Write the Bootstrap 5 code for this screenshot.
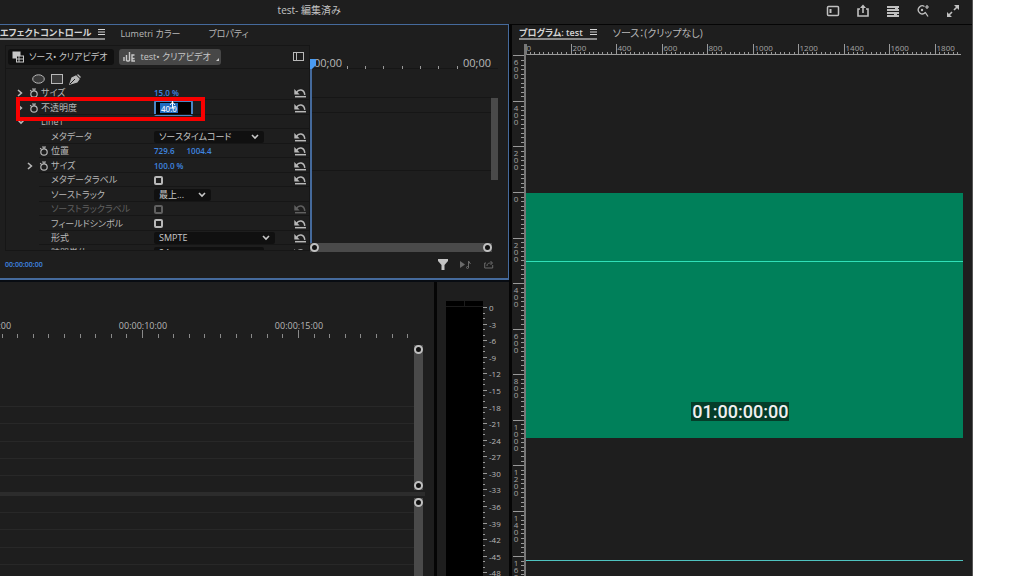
<!DOCTYPE html>
<html lang="ja">
<head>
<meta charset="utf-8">
<meta name="viewport" content="width=device-width, initial-scale=1">
<title>test - 編集済み</title>
<link rel="stylesheet" href="https://cdn.jsdelivr.net/npm/bootstrap@5.3.0/dist/css/bootstrap.min.css">
<style>
  :root { --panel:#1e1e1e; --ink:#b8b8b8; --hot:#3f86e0; --edge:#456a9c; --seam:#050505; --rule:#161616; }
  body { background:#fff; color:var(--ink); font:9px/12px "Open Sans","Noto Sans CJK JP",sans-serif; font-feature-settings:"palt"; }
  .app { width:95%; background:var(--panel); border-right:1px solid #555; }
  button { background:none; border:0; padding:0; color:inherit; font:inherit; line-height:inherit; }
  svg { display:block; fill:none; stroke:currentColor; }
  svg text { fill:currentColor; stroke:none; }
  .topbar { height:24px; padding:0 12px 0 3px; }
  .topbar h1 { font-size:10px; line-height:20px; flex:0 0 64%; color:#c4c4c4; }
  .topbar nav { gap:16px; height:21px; color:#c0c0c0; }
  .leftside { flex:0 0 510px; border-right:1px solid var(--seam); }
  .effects { border:1px solid var(--edge); border-left:0; border-bottom-width:2px; }
  .tabs { height:16px; line-height:13px; }
  .tabs button { height:15px; padding-top:2px; white-space:nowrap; }
  .tabs .on { color:#d4d4d4; font-weight:600; border-bottom:2px solid #8a8a8a; gap:7px; }
  .effects .tabs { gap:15px; }
  .tabs .apart { margin-left:13px; }
  .props { flex:0 0 310px; padding-left:5px; }
  .propbox { border:1px solid var(--rule); }
  .chips { height:23px; gap:5px; padding:0 5px 0 2px; border-bottom:1px solid var(--rule); }
  .chip { height:16px; border-radius:3px; background:#101010; gap:5px; padding:0 7px 0 4px; line-height:14px; color:#c8c8c8; white-space:nowrap; }
  .chip.lit { background:#474747; padding-right:2px; }
  .masks { height:17px; gap:6px; padding-left:26px; padding-top:3px; }
  .clip { height:164px; overflow:hidden; }
  .rows { height:174px; display:grid; grid-template-rows:repeat(12,1fr); }
  .prow { display:grid; grid-template-columns:148px 1fr 14px; align-items:center; position:relative; padding-right:1px; min-height:0; }
  .prow::after { content:""; position:absolute; left:33px; right:0; bottom:0; border-bottom:1px solid var(--rule); }
  .pname { display:grid; grid-template-columns:12px 12px 1fr; align-items:center; padding-left:11px; }
  .pname.deep { padding-left:21px; }
  .val { color:var(--hot); font-size:8px; font-weight:600; gap:12px; }
  .off { color:#606060; }
  .pick { appearance:none; height:12px; width:110px; border:0; border-radius:2px; padding:0 5px; color:#c8c8c8; line-height:12px; font:inherit;
    background:#101010 url("data:image/svg+xml,%3Csvg xmlns='http://www.w3.org/2000/svg' viewBox='0 0 8 6'%3E%3Cpath d='M1 1l3 3 3-3' fill='none' stroke='%23c8c8c8' stroke-width='1.6'/%3E%3C/svg%3E") no-repeat right 5px center/8px 6px; }
  .pick.slim { width:57px; } .pick.wide { width:121px; }
  .box { appearance:none; width:9px; height:9px; margin:0; border:2px solid #b8b8b8; border-radius:2px; }
  .box:disabled { border-color:#606060; }
  .amount { width:39px; height:16px; border:2px solid #4a86c6; border-radius:2px; padding:0 5px; color:#e6f0ff; font-size:8px; font-weight:600; line-height:12px; background:linear-gradient(#1f6cc0,#1f6cc0) no-repeat 4px center/18px 10px #000; outline:0; }
  .pointer { position:absolute; left:162px; top:0; color:#fff; }
  .callout { position:absolute; left:10px; top:-3px; width:189px; height:24px; border:4px solid #f80000; z-index:3; }
  .keys { flex:1 1 0; min-width:0; padding-right:10px; }
  .keyhead { height:12px; overflow:visible; border-bottom:1px solid var(--rule); }
  .keybody { height:174px; border-left:2px solid var(--edge); position:relative; }
  .keylines { margin-top:28px; height:145px; flex:1; background:linear-gradient(var(--rule),var(--rule)) 0 0/100% 1px no-repeat,linear-gradient(var(--rule),var(--rule)) 0 15px/100% 1px no-repeat,linear-gradient(var(--rule),var(--rule)) 0 73px/100% 1px no-repeat; }
  .vthumb { width:7px; height:82px; background:#4a4a4a; margin-top:29px; }
  .playhead { position:absolute; left:-2px; top:-12px; color:#4a9af0; }
  .hbar { height:9px; background:#4a4a4a; margin-right:6px; }
  .knob { width:9px; height:9px; border:2px solid #c0c0c0; border-radius:50%; background:#111; flex:none; }
  .efoot { height:26px; padding:0 14px 0 5px; color:#6a6a6a; }
  .tc { font-size:7px; font-weight:600; color:var(--hot); }
  .lower { border-top:2px solid #080c12; min-height:0; }
  .timeline { padding-top:36px; border-right:3px solid var(--seam); min-width:0; }
  .truler { height:23px; }
  .tracks { display:grid; flex:1; }
  .upper { grid-template-rows:66px 17px 18px 17px 17px 16px; }
  .under { grid-template-rows:17px 17px 18px 17px 17px; }
  .track { border-bottom:1px solid #282828; }
  .sbar { width:9px; background:#4a4a4a; margin:4px 0 2px; }
  .under + .sbar { margin:2px 0 0; }
  .trackset { padding-right:11px; }
  .splitline { height:4px; background:#2c2c2c; margin-right:9px; }
  .meter { flex:0 0 72px; padding:19px 0 0 9px; }
  .bars { width:37px; background:#000; }
  .bars i { height:6px; border-bottom:1px solid #1b1b1b; flex:1; }
  .bars i + i { border-left:1px solid #1b1b1b; }
  .program { border-left:2px solid var(--seam); border-top:1px solid var(--seam); min-width:0; }
  .program .tabs { padding-left:7px; gap:16px; }
  .tabs .source { font-size:10px; }
  .hrule { height:14px; margin-left:12px; color:#a4a4a4; }
  .vrule { flex:0 0 14px; color:#a4a4a4; border-right:2px solid #777; overflow:hidden; }
  .stage { position:relative; padding:138px 9px 0 0; }
  .frame { aspect-ratio:16/9; background:#00805a; padding-bottom:17px; }
  .stamp { font:500 18px/19px Roboto,sans-serif; color:#f0f0f0; background:#053d29; padding:0 1px; margin-right:8px; }
  .guide { position:absolute; left:0; right:9px; height:1px; background:#4fc4c0; }
  .guide.first { top:206px; background:#30e0b8; } .guide.second { top:505px; }
</style>
</head>
<body>
<svg width="0" height="0" class="position-absolute" aria-hidden="true">
  <symbol id="menu" viewBox="0 0 7 8"><path d="M0 1.5h7M0 4h7M0 6.5h7" stroke-width="1.2"/></symbol>
  <symbol id="watch" viewBox="0 0 10 10"><circle cx="5" cy="6" r="3.2" stroke-width="1.2"/><path d="M3 1h4M5 1v2M1.2 2.2l1.2 1.2" stroke-width="1.2"/></symbol>
  <symbol id="undo" viewBox="0 0 12 10"><path d="M2.5 4.5C4.5 1 10 .8 10.8 6.8" stroke-width="1.5"/><path d="M0.3 1v5.6h5.4z" fill="currentColor" stroke="none"/><path d="M1 8.7h11" stroke-width="1.5"/></symbol>
  <symbol id="right" viewBox="0 0 6 8"><path d="M1 1l3.4 3L1 7" stroke-width="1.6"/></symbol>
  <symbol id="down" viewBox="0 0 8 6"><path d="M1 1l3 3 3-3" stroke-width="1.6"/></symbol>
</svg>

<div class="app vh-100 overflow-hidden d-flex flex-column">
  <header class="topbar d-flex justify-content-between">
    <h1 class="m-0 text-center fw-normal">test- 編集済み</h1>
    <nav class="d-flex align-items-center">
      <button aria-label="ワークスペース"><svg width="14" height="12"><rect x="1.5" y="1.5" width="11" height="9" rx="1" stroke-width="1.5"/><path d="M4.5 4v4" stroke-width="2"/></svg></button>
      <button aria-label="書き出し"><svg width="14" height="14"><path d="M4 5H2v7h10V5h-2M7 9V2" stroke-width="1.6"/><path d="M4 4l3-3.6L10 4z" fill="currentColor" stroke="none"/></svg></button>
      <button aria-label="パネル"><svg width="14" height="12"><path d="M1 2h12M1 5h12M1 8h12M1 11h12" stroke-width="1.8"/><path d="M9 3.5h3M8 9.5h3" stroke-width="1"/></svg></button>
      <button aria-label="検索"><svg width="14" height="14"><path d="M8.5 2.5a4 4 0 1 0 .8 6M9 8l3 4.5" stroke-width="1.3"/><circle cx="6" cy="6" r="1.2" fill="currentColor" stroke="none"/><path d="M11 1v4M9 3h4" stroke-width="1.2"/></svg></button>
      <button aria-label="全画面"><svg width="14" height="14"><path d="M3 11l3-3M8 6l3-3" stroke-width="1.6"/><path d="M8 1h5v5zM1 8v5h5z" fill="currentColor" stroke="none"/></svg></button>
    </nav>
  </header>

  <main class="d-flex flex-fill" style="min-height:0">
    <div class="leftside d-flex flex-column">
      <section class="effects" aria-label="エフェクトコントロール">
        <div class="tabs d-flex">
          <button class="on d-flex align-items-center">エフェクトコントロール<svg width="7" height="8"><use href="#menu"/></svg></button>
          <button>Lumetri カラー</button>
          <button class="apart">プロパティ</button>
        </div>
        <div class="d-flex pt-1">
          <div class="props">
            <div class="propbox">
              <div class="chips d-flex align-items-center">
                <button class="chip d-flex align-items-center"><svg width="12" height="12"><rect x="1" y="1" width="7" height="6" fill="currentColor"/><rect x="4.5" y="5" width="7" height="6" fill="#101010"/><path d="M5 8h6M7 5v6" stroke-width="1"/></svg>ソース• クリアビデオ</button>
                <button class="chip lit d-flex align-items-center"><svg width="12" height="12"><path d="M1 6v4M3.5 4v6M3.5 10h3M6.5 1v9M11.5 4H9v3.5h2.5M9 7v3h3" stroke-width="1.4"/></svg>test• クリアビデオ<svg class="align-self-end mb-1" width="3" height="3"><path d="M3 0v3H0z" fill="currentColor" stroke="none"/></svg></button>
                <button class="ms-auto" aria-label="表示"><svg width="11" height="9"><rect x=".5" y=".5" width="10" height="8"/><path d="M3.5 1v7"/></svg></button>
              </div>
              <div class="masks d-flex align-items-center">
                <button aria-label="楕円"><svg width="13" height="10"><ellipse cx="6.5" cy="5" rx="5.8" ry="4.2" fill="#3a3a3a"/></svg></button>
                <button aria-label="長方形"><svg width="12" height="10"><rect x=".5" y=".5" width="11" height="9" fill="#3a3a3a"/></svg></button>
                <button aria-label="ペン"><svg width="13" height="12"><path d="M1 11l2-6 4-2 3 3-2 3zM8.5 1.5l3 3" fill="currentColor" stroke-width="1.3"/><path d="M1 11l5-5" stroke="#1e1e1e"/></svg></button>
              </div>
              <div class="clip"><div class="rows" id="rows"></div></div>
            </div>
          </div>
          <div class="keys pt-2 mt-1">
            <svg class="keyhead w-100" id="keyruler"></svg>
            <div class="keybody d-flex">
              <svg class="playhead" width="6" height="12"><path d="M0 2h6v6l-4 4H0z" fill="currentColor" stroke="none"/></svg>
              <div class="keylines"></div><div class="vthumb"></div>
            </div>
            <div class="hbar d-flex justify-content-between"><i class="knob"></i><i class="knob"></i></div>
          </div>
        </div>
        <footer class="efoot d-flex align-items-center">
          <span class="tc me-auto">00:00:00:00</span>
          <div class="d-flex align-items-center gap-2">
            <button class="me-1" aria-label="フィルター"><svg width="10" height="11" style="color:#c4c4c4"><path d="M0 0h10v2L6.5 6v5h-3V6L0 2z" fill="currentColor" stroke="none"/></svg></button>
            <button class="me-1" aria-label="再生"><svg width="12" height="9"><path d="M0 1l5 3.5L0 8z" fill="currentColor" stroke="none"/><path d="M8.500 8V1l2 3"/><circle cx="7.500" cy="7.500" r="1"/></svg></button>
            <button aria-label="共有"><svg width="10" height="9"><path d="M2 3H.7v5h8V5M3 6c0-3 2-3 5-3M6.5 1l2 2-2 2"/></svg></button>
          </div>
        </footer>
      </section>

      <div class="lower d-flex flex-fill">
        <section class="timeline flex-fill d-flex flex-column" aria-label="タイムライン">
          <svg class="truler w-100 flex-shrink-0" id="truler"></svg>
          <div class="trackset d-flex flex-shrink-0">
            <div class="tracks upper"><div class="track"></div><div class="track"></div><div class="track"></div><div class="track"></div><div class="track"></div><div></div></div>
            <div class="sbar d-flex flex-column justify-content-between"><i class="knob"></i><i class="knob"></i></div>
          </div>
          <div class="splitline flex-shrink-0"></div>
          <div class="trackset d-flex flex-fill">
            <div class="tracks under"><div class="track"></div><div class="track"></div><div class="track"></div><div class="track"></div><div></div></div>
            <div class="sbar"><i class="knob d-block"></i></div>
          </div>
        </section>
        <section class="meter d-flex" aria-label="オーディオメーター">
          <div class="bars d-flex"><i></i><i></i></div>
          <svg class="flex-fill h-100" style="width:24px" id="dbscale"></svg>
        </section>
      </div>
    </div>

    <section class="program flex-fill d-flex flex-column" aria-label="プログラムモニター">
      <div class="tabs d-flex">
        <button class="on d-flex align-items-center">プログラム: test<svg width="7" height="8"><use href="#menu"/></svg></button>
        <button class="source">ソース：(クリップなし)</button>
      </div>
      <svg class="hrule flex-shrink-0" id="hrule"></svg>
      <div class="d-flex flex-fill" style="min-height:0">
        <svg class="vrule h-100" id="vrule"></svg>
        <div class="stage flex-fill">
          <div class="frame d-flex justify-content-center align-items-end" id="frame"><span class="stamp">01:00:00:00</span></div>
          <div class="guide first"></div><div class="guide second"></div>
        </div>
      </div>
    </section>
  </main>
</div>

<script src="https://cdn.jsdelivr.net/npm/bootstrap@5.3.0/dist/js/bootstrap.bundle.min.js"></script>
<script>
  const icon = (id, w, h) => `<svg width="${w}" height="${h}"><use href="#${id}"/></svg>`;
  const val = (...v) => `<div class="val d-flex">${v.map(t => `<button>${t}</button>`).join('')}</div>`;
  const pick = (id, t, c = '') => `<div class="d-flex"><select id="${id}" class="pick ${c}"><option>${t}</option></select></div>`;
  const box = (id, off) => `<div class="d-flex"><input type="checkbox" id="${id}" class="box" ${off ? 'disabled' : ''}></div>`;

  // Effect properties: n name, d nested, a arrow, w stopwatch, v value, r reset, o disabled
  const props = [
    { n:'サイズ', a:'right', w:1, v:val('15.0 %'), r:1 },
    { n:'不透明度', a:'right', w:1, id:'p1', r:1,
      v:'<div class="d-flex"><input id="p1" class="amount" value="40.0"></div><svg class="pointer" width="9" height="10"><path d="M4.5 0v8M2 5l2.5-3L7 5M2 8h5" stroke-width="1"/></svg>', x:'<div class="callout"></div>' },
    { n:'Line1', a:'down', v:'<span></span>' },
    { n:'メタデータ', d:1, id:'p3', v:pick('p3','ソースタイムコード'), r:1 },
    { n:'位置', d:1, w:1, v:val('729.6','1004.4'), r:1 },
    { n:'サイズ', d:1, a:'right', w:1, v:val('100.0 %'), r:1 },
    { n:'メタデータラベル', d:1, id:'p6', v:box('p6'), r:1 },
    { n:'ソーストラック', d:1, id:'p7', v:pick('p7','最上...','slim') },
    { n:'ソーストラックラベル', d:1, id:'p8', v:box('p8',1), r:1, o:1 },
    { n:'フィールドシンボル', d:1, id:'p9', v:box('p9'), r:1 },
    { n:'形式', d:1, id:'p10', v:pick('p10','SMPTE','wide'), r:1 },
    { n:'時間単位', d:1, id:'p11', v:pick('p11','24'), r:1 }
  ];
  document.getElementById('rows').innerHTML = props.map(p => `
    <div class="prow ${p.o ? 'off' : ''}">
      <div class="pname ${p.d ? 'deep' : ''}">
        <span>${p.a ? icon(p.a, p.a === 'down' ? 8 : 6, p.a === 'down' ? 6 : 8) : ''}</span>
        <span>${p.w ? icon('watch', 10, 10) : ''}</span>
        <label class="text-nowrap" ${p.id ? `for="${p.id}"` : ''}>${p.n}</label>
      </div>${p.v}
      ${p.r ? `<button aria-label="リセット">${icon('undo', 12, 10)}</button>` : ''}${p.x || ''}
    </div>`).join('');

  const line = (x1, y1, x2, y2, c = '#999') => `<path d="M${x1} ${y1}L${x2} ${y2}" stroke="${c}" shape-rendering="crispEdges"/>`;
  const text = (x, y, s, t, a = 'start') => `<text x="${x}" y="${y}" font-size="${s}" text-anchor="${a}">${t}</text>`;
  const $ = id => document.getElementById(id);

  function draw() {
    const px = $('frame').clientWidth / 1920;
    let s = line(0, 13.5, 1920 * px, 13.5);
    for (let v = 0; v < 1920; v += 20) {
      const x = Math.round(v * px) + 1.5, major = v % 200 === 0;
      s += line(x, major ? 3 : 11, x, 14);
      if (major) s += text(x + 1, 10, 8, v);
    }
    $('hrule').style.width = 1920 * px + 'px';
    $('hrule').innerHTML = s + '<path d="M0 3h3v11H0z" fill="#777" stroke="none"/>';

    s = '';
    for (let v = -600; v < 1760; v += 20) {
      const y = Math.round(137 + v * px) + .5, major = v % 200 === 0;
      s += line(major ? 1 : 9, y, 12, y);
      if (major) [...String(Math.abs(v))].forEach((c, i) => s += text(4, y + 9 + i * 7, 8, c, 'middle'));
    }
    $('vrule').innerHTML = s;

    s = '';
    for (let i = -9; i <= 17; i++) {
      const x = Math.round(142 + i * 15.6) + .5, major = i % 10 === 0;
      s += line(x, major ? 12 : 16, x, 20, '#8a8a8a');
    }
    s += text(143, 11, 9, '00:00:10:00', 'middle') + text(299, 11, 9, '00:00:15:00', 'middle') + text(-13, 11, 9, '00:00:05:00', 'middle');
    $('truler').innerHTML = s;

    s = '';
    for (let d = 0; d < 50; d++) {
      const y = Math.round(6 + d * 5.53) + .5, major = d % 3 === 0;
      s += line(0, y, major ? 4 : 2, y);
      if (major) s += text(6, y + 3, 8, d ? '-' + d : '0');
    }
    $('dbscale').innerHTML = s;

    const w = $('keyruler').clientWidth;
    s = text(4, 10, 11, '00;00') + text(w - 7, 10, 11, '00;00', 'end');
    for (let i = 0; i < 7; i++) { const x = Math.round(w * (.195 + i * .0975)) + .5; s += line(x, 9, x, 12); }
    $('keyruler').innerHTML = s;
  }
  draw();
  addEventListener('resize', draw);
</script>
</body>
</html>
